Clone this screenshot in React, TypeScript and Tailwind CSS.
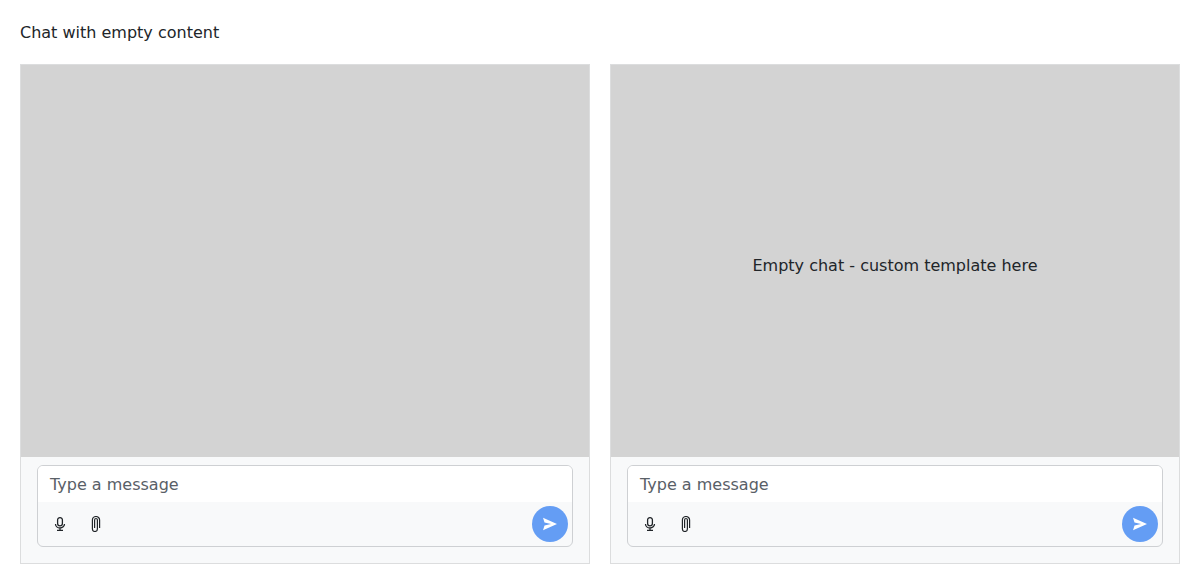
import type { ReactNode } from 'react';

function MicrophoneIcon() {
  return (
    <svg viewBox="0 0 16 16" className="size-4" fill="none" stroke="currentColor" strokeWidth="1.3" aria-hidden="true">
      <path d="M8 1.600A2.300 2.300 0 0 1 10.400 3.800v3.700a2.400 2.400 0 0 1-4.800 0V3.800A2.300 2.300 0 0 1 8 1.600z" />
      <path d="M3.500 8a4.500 4 0 0 0 9 0M8 12v2.500M5 14.400h6" />
    </svg>
  );
}

function PaperclipIcon() {
  return (
    <svg viewBox="0 0 16 16" className="size-4" fill="none" stroke="currentColor" strokeWidth="1.200" aria-hidden="true">
      <path d="M11.600 12V4a3.600 3.500 0 0 0-7.200 0v9a2.500 2.500 0 0 0 5 0V4a1.400 1.500 0 0 0-2.800 0v8" />
    </svg>
  );
}

function SendIcon() {
  return (
    <svg viewBox="0 0 16 16" className="size-4" fill="currentColor" aria-hidden="true">
      <path d="M1 1.700L15 8 1 14.300l1.500-4.800L9 8 2.500 6.500z" />
    </svg>
  );
}

function Chat({ label, children }: { label: string; children?: ReactNode }) {
  return (
    <section className="flex h-[500px] min-w-0 flex-1 flex-col border border-[#dcddde] bg-[#f8f9fa]">
      <div className="flex flex-1 items-center justify-center bg-[#d3d3d3] pt-2.5">{children}</div>
      <form className="px-4 pt-2 pb-4" onSubmit={(e) => e.preventDefault()}>
        <div className="overflow-hidden rounded-md border border-[#ced0d3]">
          <textarea
            aria-label={label}
            rows={1}
            placeholder="Type a message"
            className="block h-9 w-full resize-none bg-white px-3 pt-1.5 pb-1 leading-[26px] outline-none placeholder:text-[#596067]"
          />
          <div className="flex items-center p-1">
            <button type="button" aria-label="Speech to text" className="flex size-9 items-center justify-center">
              <MicrophoneIcon />
            </button>
            <button type="button" aria-label="Attach file" className="flex size-9 items-center justify-center">
              <PaperclipIcon />
            </button>
            <button
              type="submit"
              aria-label="Send message"
              className="ml-auto flex size-9 items-center justify-center rounded-full bg-[#649df4] text-white"
            >
              <SendIcon />
            </button>
          </div>
        </div>
      </form>
    </section>
  );
}

export default function App() {
  return (
    <main className="p-5 font-['DejaVu_Sans',sans-serif] text-base text-[#212529]">
      <p className="mb-[18px] leading-[26px]">Chat with empty content</p>
      <div className="flex gap-5">
        <Chat label="Message" />
        <Chat label="Message for chat with template">
          <p>Empty chat - custom template here</p>
        </Chat>
      </div>
    </main>
  );
}
